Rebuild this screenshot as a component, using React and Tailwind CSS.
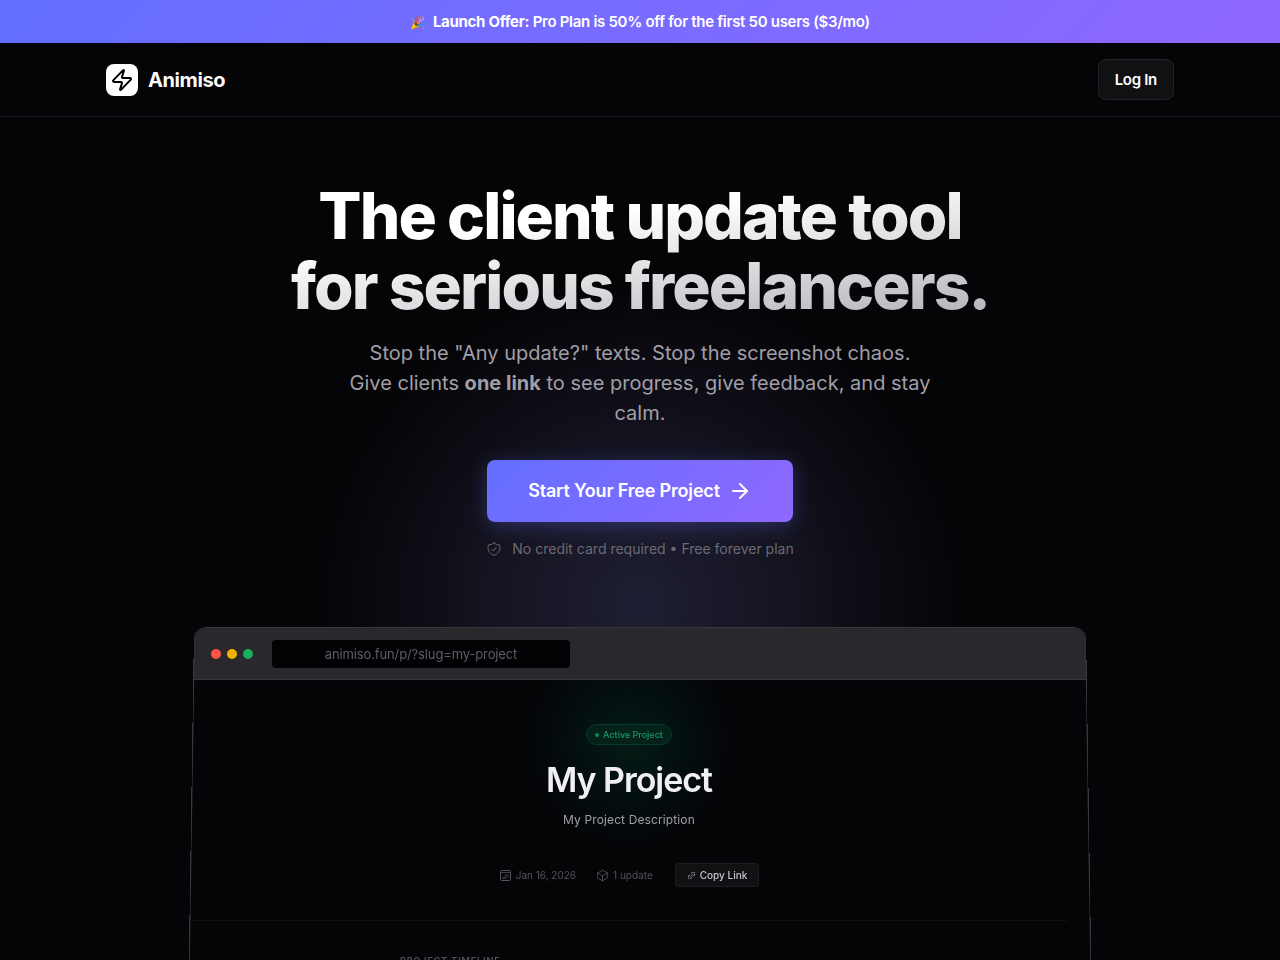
import React from 'react';
import { ArrowRight, Zap } from 'lucide-react';
import { HiOutlineCube, HiOutlineShieldCheck } from 'react-icons/hi2';
import { PiLinkSimple } from 'react-icons/pi';

function CalendarIcon() {
  return (
    <svg width="13" height="13" viewBox="0 0 13 13" fill="none" stroke="currentColor" aria-hidden="true">
      <rect x="1.5" y="1.5" width="10" height="10" rx="1" />
      <path d="M1.5 3.5h10M5.5 6h4M3.5 8h6M3.5 9.5h3" strokeWidth="0.8" />
    </svg>
  );
}

function LaunchBanner() {
  return (
    <div className="bg-linear-[135deg] from-[#636fff] to-[#8f68ff] px-4 py-3 text-center text-[15px] leading-[19px] font-semibold tracking-[-0.02em] text-white">
      <span className="mr-2 text-xs">🎉</span>
      <strong className="font-bold">Launch Offer:</strong> Pro Plan is 50% off for the first 50 users ($3/mo)
    </div>
  );
}

function Navbar() {
  return (
    <header className="border-b border-[#18171b]">
      <div className="mx-auto flex max-w-[1100px] items-center justify-between px-4 py-4">
        <a href="#" className="flex items-center gap-[10px] text-xl font-bold tracking-[-0.02em] text-[#fafafa]">
          <span className="flex size-8 items-center justify-center rounded-lg bg-white text-black">
            <Zap size={24} />
          </span>
          Animiso
        </a>
        <button className="h-[41px] rounded-lg border border-[#232226] bg-[#111013] px-4 text-[15px] leading-[25px] font-semibold tracking-[-0.02em] text-white">
          Log In
        </button>
      </div>
    </header>
  );
}

function Hero() {
  return (
    <section className="relative mx-auto max-w-[1100px] px-4 pt-16 pb-[67px] text-center">
      <div className="pointer-events-none absolute top-[166px] left-1/2 size-[640px] -translate-x-1/2 bg-[radial-gradient(closest-side,rgba(125,125,215,0.22),rgba(125,125,200,0.12)_50%,transparent)]" />
      <div className="relative flex flex-col items-center">
        <h1 className="w-full bg-linear-to-br from-white from-35% to-[#a8a5ad] bg-clip-text text-[64px] leading-[70px] font-extrabold tracking-[-0.03em] text-transparent">
          The client update tool
          <br />
          for serious freelancers.
        </h1>
        <p className="mt-[17px] max-w-[600px] text-xl leading-[30px] text-[#a09fa7]">
          Stop the "Any update?" texts. Stop the screenshot chaos.
          <br />
          Give clients <strong className="font-bold">one link</strong> to see progress, give feedback, and stay calm.
        </p>
        <a
          href="#start"
          className="mt-8 flex h-[62px] items-center gap-2 rounded-lg bg-linear-[135deg] from-[#636fff] to-[#8f68ff] px-[41px] text-lg font-semibold tracking-[-0.01em] text-white shadow-[0_4px_20px_rgba(99,111,255,0.3)]"
        >
          Start Your Free Project
          <ArrowRight size={24} />
        </a>
        <p className="mt-4 flex items-center gap-[10px] text-sm leading-[22px] text-[#6b6a74]">
          <HiOutlineShieldCheck size={16} />
          No credit card required • Free forever plan
        </p>
      </div>
    </section>
  );
}

function BrowserMockup() {
  return (
    <section className="relative mx-auto max-w-[892px]">
      {/* tilted window frame, the page sits on top of it */}
      <div className="absolute inset-0 origin-top overflow-hidden rounded-xl border border-[#39373d] bg-[#050407] [transform:perspective(1000px)_rotateX(2deg)] will-change-transform">
        <div className="h-[52px] border-b border-[#39373d] bg-[#2a282d]" />
      </div>

      <div className="relative">
        <div className="flex h-[53px] items-center px-[17px]">
          <div className="flex gap-[6px]">
            <span className="size-[10px] rounded-full bg-[#ff5347]" />
            <span className="size-[10px] rounded-full bg-[#f0b100]" />
            <span className="size-[10px] rounded-full bg-[#18b05f]" />
          </div>
          <div className="ml-[19px] w-[298px] rounded bg-[#020103] text-center text-[13px] leading-7 tracking-[-0.01em] text-[#5f5e64]">
            animiso.fun/p/?slug=my-project
          </div>
        </div>

        <div className="mr-[19px] -ml-[3px] flex flex-col items-center border-b border-[#111013] bg-[radial-gradient(circle_110px_at_50%_62px,rgba(0,120,85,0.2),transparent)] pt-11 pb-[33px]">
          <span className="flex h-[21px] items-center gap-1 rounded-full border border-[#063a2c] bg-[#04211a] px-2 text-[9px] font-medium text-[#1c9a70]">
            <span className="size-1 rounded-full bg-[#14805c]" />
            Active Project
          </span>
          <h2 className="mt-[13px] text-[34px] leading-[44px] font-semibold tracking-[-0.03em] text-[#f0eff2]">
            My Project
          </h2>
          <p className="mt-2 text-xs leading-5 tracking-[0.01em] text-[#a09fa7]">My Project Description</p>
          <div className="mt-[33px] flex items-center text-[10px] text-[#55545b]">
            <span className="flex items-center gap-1">
              <CalendarIcon />
              Jan 16, 2026
            </span>
            <span className="ml-5 flex items-center gap-1">
              <HiOutlineCube size={13} />
              1 update
            </span>
            <button className="ml-[22px] flex h-6 items-center gap-1 rounded border border-[#1e1d21] bg-[#111013] px-[11px] font-medium text-[#c4c3c9]">
              <PiLinkSimple size={9} />
              Copy Link
            </button>
          </div>
        </div>

        <div className="px-[206px] pt-8 pb-48">
          <h3 className="text-[9px] leading-4 font-semibold tracking-widest text-[#55545b] uppercase">
            Project Timeline
          </h3>
        </div>
      </div>
    </section>
  );
}

export default function App() {
  return (
    <div className="min-h-screen overflow-hidden bg-[#050407] font-[Inter,sans-serif]">
      <LaunchBanner />
      <Navbar />
      <main>
        <Hero />
        <BrowserMockup />
      </main>
    </div>
  );
}
